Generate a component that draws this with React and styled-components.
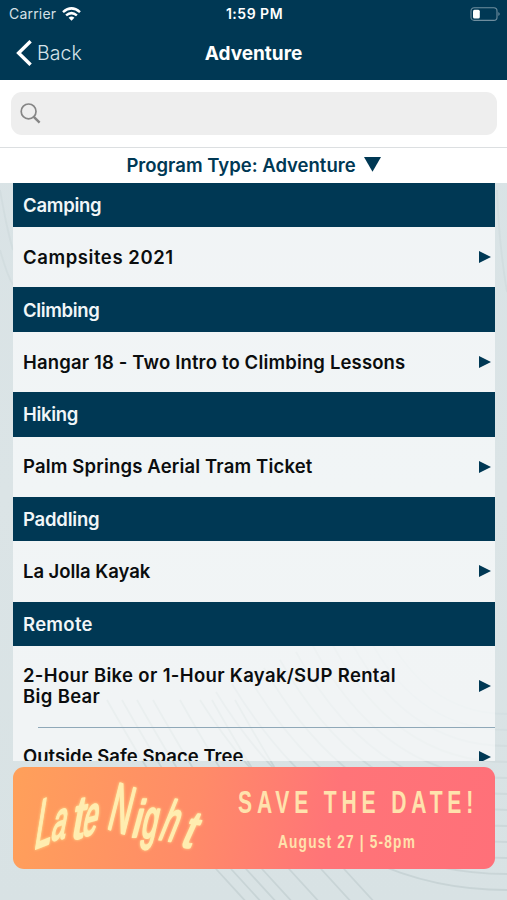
import React from "react";
import styled, { createGlobalStyle } from "styled-components";

const NAVY = "#003854";

const GlobalStyle = createGlobalStyle`
  *, *::before, *::after { box-sizing: border-box; }
  html, body { margin: 0; padding: 0; }
  body { font-family: Inter, "Open Sans", sans-serif; overflow: hidden; }
`;

const Screen = styled.div`
  position: relative;
  width: 507px;
  height: 900px;
  display: flex;
  flex-direction: column;
  overflow: hidden;
  background: linear-gradient(#d8e2e5, #dbe4e6 55%, #d8e2e4);
`;

const Backdrop = styled.svg`
  position: absolute;
  inset: 0;
  width: 507px;
  height: 900px;
  fill: none;
  stroke: #c8d4d6;
  stroke-width: 1.8;
`;

const Header = styled.header`
  position: relative;
  height: 79.5px;
  flex: none;
  background: ${NAVY};
  color: #fff;
`;

const StatusBar = styled.div`
  height: 27px;
  display: grid;
  grid-template-columns: 1fr auto 1fr;
  align-items: center;
  padding: 0 7px 0 9px;
`;

const Carrier = styled.div`
  display: flex;
  align-items: center;
  gap: 6px;
  font-size: 14px;
  letter-spacing: 0.2px;
  color: #d5e0e7;
`;

const Clock = styled.div`
  font-size: 14px;
  font-weight: 600;
  letter-spacing: 0.5px;
`;

const BatteryIcon = styled.svg`
  justify-self: end;
`;

const NavBar = styled.nav`
  height: 52px;
  display: grid;
  grid-template-columns: 1fr auto 1fr;
  align-items: center;
  padding: 0 16px;
`;

const BackButton = styled.button`
  display: flex;
  align-items: center;
  gap: 5px;
  padding: 0;
  border: 0;
  background: none;
  color: #d6e3e9;
  font: 300 19.5px/24px Inter, sans-serif;
  letter-spacing: 0.1px;
`;

const Title = styled.h1`
  margin: 0;
  padding-top: 1px;
  font-size: 19px;
  line-height: 24px;
  font-weight: 700;
`;

const SearchArea = styled.div`
  position: relative;
  flex: none;
  height: 68px;
  padding: 12px 10px 0 11px;
  background: #fff;
  border-bottom: 1px solid #dcdfe1;
`;

const SearchField = styled.div`
  height: 43.5px;
  display: flex;
  align-items: center;
  padding-left: 9px;
  border-radius: 11px;
  background: #eee;
`;

const Filter = styled.div`
  position: relative;
  flex: none;
  height: 35.3px;
  display: flex;
  align-items: center;
  justify-content: center;
  gap: 8px;
  background: #fff;
  color: ${NAVY};
  font-size: 18.5px;
  font-weight: 600;
  white-space: pre;
`;

const DownArrow = styled.svg`
  margin-bottom: 2px;
`;

const List = styled.main`
  position: relative;
  flex: none;
  height: 578px;
  margin: 0 12px 0 13px;
  overflow: hidden;
  background: rgba(255, 255, 255, 0.62);
`;

const SectionTitle = styled.h2`
  height: 44.4px;
  margin: 0;
  display: flex;
  align-items: center;
  padding: 0 0 0 10px;
  background: ${NAVY};
  color: #f1f6f8;
  font-size: 18.5px;
  font-weight: 600;
  letter-spacing: ${(p) => p.$track}px;
`;

const Row = styled.div`
  height: ${(p) => p.$height}px;
  display: flex;
  align-items: center;
  justify-content: space-between;
  padding: 0 4px 0 10px;
`;

const RowLabel = styled.span`
  max-width: 394px;
  color: #0b0d0e;
  font-size: 18.5px;
  line-height: 21px;
  font-weight: 600;
  letter-spacing: ${(p) => p.$track}px;
`;

const Divider = styled.hr`
  height: 1px;
  margin: 0 0 0 25px;
  border: 0;
  background: #8fa8b8;
`;

const Banner = styled.aside`
  position: relative;
  flex: none;
  height: 102px;
  margin: 6.2px 12px 0 13px;
  display: grid;
  grid-template-columns: 205px 1fr;
  border-radius: 11px;
  overflow: hidden;
  background: linear-gradient(100deg, #ffa05a 0%, #ff8b68 38%, #ff7478 66%, #ff7079 100%);
`;

const Lettering = styled.svg`
  width: 205px;
  height: 102px;
  fill: #ffedb0;
  stroke: #ffedb0;
  stroke-width: 2.2;
  stroke-linejoin: round;
  font-family: "Liberation Sans", Arial, sans-serif;
  filter: drop-shadow(0 0 1.5px #ffdf92);
`;

const Announcement = styled.svg`
  width: 277px;
  height: 102px;
  font-family: "Liberation Sans", Arial, sans-serif;
  font-weight: 700;
  fill: #ffe2ad;
`;

const sections = [
  { title: "Camping", track: -0.25, rows: [["Campsites 2021", 0.58, 60.3]] },
  { title: "Climbing", track: -0.35, rows: [["Hangar 18 - Two Intro to Climbing Lessons", 0.15, 60.3]] },
  { title: "Hiking", track: -0.3, rows: [["Palm Springs Aerial Tram Ticket", 0.16, 60.3]] },
  { title: "Paddling", track: -0.2, rows: [["La Jolla Kayak", -0.05, 60.3]] },
  {
    title: "Remote",
    track: 0.3,
    rows: [
      ["2-Hour Bike or 1-Hour Kayak/SUP Rental Big Bear", 0.34, 80.6],
      ["Outside Safe Space Tree", 0.03, 58.8],
    ],
  },
];

// Brush lettering: character, x, baseline y, size, width factor, baseline rise, slant.
const letters = [
  ["L", 20, 83, 72, 0.42, -0.17, 0.16],
  ["a", 37, 74, 56, 0.46, -0.1, 0.2],
  ["t", 57, 73, 62, 0.72, -0.15, 0.18],
  ["e", 68, 70, 57, 0.46, -0.12, 0.2],
  ["N", 93, 61, 66, 0.44, 0.14, 0.25],
  ["i", 117, 70, 52, 0.75, 0, 0.27],
  ["g", 127, 70, 55, 0.5, 0.06, 0.22],
  ["h", 144, 72, 55, 0.52, 0.08, 0.4],
  ["t", 166, 79, 50, 0.8, 0.12, 0.45],
];

function Arrow() {
  return (
    <svg width="12" height="12" viewBox="0 0 12 12">
      <path d="M0 0L12 6L0 12Z" fill={NAVY} />
    </svg>
  );
}

function Curves() {
  return (
    <Backdrop viewBox="0 0 507 900">
      {[217, 232, 247, 263, 290, 322, 345].map((x) => (
        <path key={x} d={`M${x - 110} 700Q${x - 42} 820 ${x} 870L${x + 32} 905`} />
      ))}
      {Array.from({ length: 12 }, (_, i) => (
        <path
          key={i}
          d={`M${200 + i * 16} ${700 - i * 8}Q${320 + i * 9} ${890 - i * 16} 507 ${890 - i * 16}`}
          opacity={1 - i * 0.07}
        />
      ))}
      <path d="M0 190Q7 230 13 250M0 250Q7 275 13 285M497 190Q499 245 507 292" opacity=".4" />
    </Backdrop>
  );
}

export default function App() {
  return (
    <Screen>
      <GlobalStyle />
      <Curves />
      <Header>
        <StatusBar>
          <Carrier>
            Carrier
            <svg width="19" height="14" viewBox="0 0 19 14" fill="none" stroke="#fff" strokeWidth="2.5">
              <path d="M1 5.1Q9.5-2.4 18 5.1M4.1 8.4Q9.5 3.8 14.9 8.4" />
              <path d="M9.5 13.8L6.6 10.8Q9.5 8.4 12.4 10.8Z" fill="#fff" stroke="none" />
            </svg>
          </Carrier>
          <Clock>1:59 PM</Clock>
          <BatteryIcon width="30" height="14" viewBox="0 0 30 14">
            <rect x="1" y=".8" width="26" height="12.6" rx="3.2" fill="none" stroke="#6f8e9f" strokeWidth="1.1" />
            <rect x="3" y="2.7" width="6.8" height="8.8" rx="1.5" fill="#fff" />
            <path d="M28.4 5Q31 7 28.4 9Z" fill="#6f8e9f" />
          </BatteryIcon>
        </StatusBar>
        <NavBar>
          <BackButton>
            <svg width="16" height="26" viewBox="0 0 16 26" fill="none" stroke="#fff" strokeWidth="3.4">
              <path d="M14.6 1.2L2.6 13L14.6 24.8" />
            </svg>
            Back
          </BackButton>
          <Title>Adventure</Title>
        </NavBar>
      </Header>
      <SearchArea>
        <SearchField>
          <svg width="21" height="21" viewBox="0 0 21 21" fill="none" stroke="#858585">
            <circle cx="8.6" cy="8.4" r="7.4" strokeWidth="1.7" />
            <path d="M13.8 13.8L19.6 19.6" strokeWidth="2.4" />
          </svg>
        </SearchField>
      </SearchArea>
      <Filter>
        Program Type: Adventure
        <DownArrow width="17" height="15" viewBox="0 0 17 15">
          <path d="M0 0H17L8.5 14.8Z" fill={NAVY} />
        </DownArrow>
      </Filter>
      <List>
        {sections.map((s) => (
          <section key={s.title}>
            <SectionTitle $track={s.track}>{s.title}</SectionTitle>
            {s.rows.map(([label, track, height], i) => (
              <React.Fragment key={label}>
                {i > 0 && <Divider />}
                <Row $height={height}>
                  <RowLabel $track={track}>{label}</RowLabel>
                  <Arrow />
                </Row>
              </React.Fragment>
            ))}
          </section>
        ))}
      </List>
      <Banner>
        <Lettering viewBox="0 0 205 102" aria-label="Late Night">
          {letters.map(([ch, x, y, size, width, rise, slant], i) => (
            <text key={i} fontSize={size} transform={`matrix(${width} ${rise} ${-slant} 1 ${x} ${y})`}>
              {ch}
            </text>
          ))}
        </Lettering>
        <Announcement viewBox="0 0 277 102">
          <text transform="translate(20 45.5) scale(.68 1)" fontSize="31" textLength="346" lengthAdjust="spacing">
            SAVE THE DATE!
          </text>
          <text transform="translate(60 80.5) scale(.72 1)" fontSize="19" textLength="190" lengthAdjust="spacing">
            August 27 | 5-8pm
          </text>
        </Announcement>
      </Banner>
    </Screen>
  );
}
